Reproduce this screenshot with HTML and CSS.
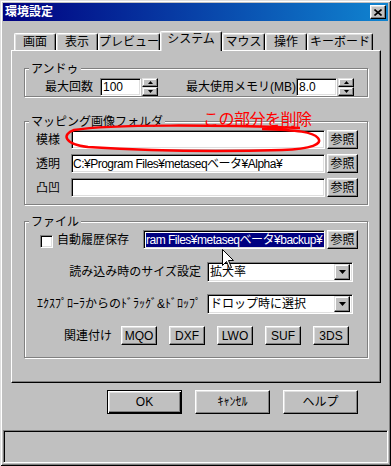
FILE: index.html
```html
<!DOCTYPE html>
<html lang="ja">
  <head>
    <meta charset="UTF-8" />
    <title>環境設定</title>
    <link rel="stylesheet" href="styles.css">
  </head>
  <body>
    <div class="window">
      <div class="titlebar">
        <span class="title">環境設定</span>
        <span class="close-btn">
          <svg width="8" height="7" viewBox="0 0 8 7"><path d="M0.5 0.5L7.5 6.5M7.5 0.5L0.5 6.5" stroke="#000" stroke-width="1.6" /></svg>
        </span>
      </div>

      <div class="tabs">
        <div class="tab tab-screen">画面</div>
        <div class="tab tab-view">表示</div>
        <div class="tab tab-preview">プレビュー</div>
        <div class="tab tab-system active">システム</div>
        <div class="tab tab-mouse">マウス</div>
        <div class="tab tab-op">操作</div>
        <div class="tab tab-key">キーボード</div>
      </div>

      <div class="panel">
        <!-- アンドゥ -->
        <div class="group group-undo">
          <div class="group-title">アンドゥ</div>
          <div class="row undo-row">
            <span class="lbl-count">最大回数</span>
            <div class="field num">100</div>
            <div class="spin">
              <span class="spin-btn"><svg width="5" height="3"><path d="M2.5 0L5 3H0z" /></svg></span>
              <span class="spin-btn"><svg width="5" height="3"><path d="M0 0H5L2.5 3z" /></svg></span>
            </div>
            <span class="lbl-mem">最大使用メモリ(MB)</span>
            <div class="field num">8.0</div>
            <div class="spin">
              <span class="spin-btn"><svg width="5" height="3"><path d="M2.5 0L5 3H0z" /></svg></span>
              <span class="spin-btn"><svg width="5" height="3"><path d="M0 0H5L2.5 3z" /></svg></span>
            </div>
          </div>
        </div>

        <!-- マッピング画像フォルダ -->
        <div class="group group-map">
          <div class="group-title">マッピング画像フォルダ</div>
          <div class="row path-row first">
            <span class="lbl-path">模様</span>
            <div class="field path"></div>
            <div class="btn btn-ref">参照</div>
          </div>
          <div class="row path-row">
            <span class="lbl-path">透明</span>
            <div class="field path">C:¥Program Files¥metaseqベータ¥Alpha¥</div>
            <div class="btn btn-ref">参照</div>
          </div>
          <div class="row path-row">
            <span class="lbl-path">凸凹</span>
            <div class="field path"></div>
            <div class="btn btn-ref">参照</div>
          </div>
        </div>

        <!-- ファイル -->
        <div class="group group-file">
          <div class="group-title">ファイル</div>
          <div class="row backup-row">
            <span class="checkbox"></span>
            <span class="lbl-backup">自動履歴保存</span>
            <div class="field backup"><span class="selected">ram Files¥metaseqベータ¥backup¥</span></div>
            <div class="btn btn-ref">参照</div>
          </div>
          <div class="row combo-row">
            <span class="lbl-combo">読み込み時のサイズ設定</span>
            <div class="field combo">
              <span class="combo-text">拡大率</span>
              <span class="combo-btn"><svg width="7" height="4"><path d="M0 0H7L3.5 4z" /></svg></span>
            </div>
          </div>
          <div class="row combo-row">
            <span class="lbl-combo">ｴｸｽﾌﾟﾛｰﾗからのﾄﾞﾗｯｸﾞ&amp;ﾄﾞﾛｯﾌﾟ</span>
            <div class="field combo">
              <span class="combo-text">ドロップ時に選択</span>
              <span class="combo-btn"><svg width="7" height="4"><path d="M0 0H7L3.5 4z" /></svg></span>
            </div>
          </div>
          <div class="row assoc-row">
            <span class="lbl-assoc">関連付け</span>
            <div class="btn btn-ext">MQO</div>
            <div class="btn btn-ext">DXF</div>
            <div class="btn btn-ext">LWO</div>
            <div class="btn btn-ext">SUF</div>
            <div class="btn btn-ext">3DS</div>
          </div>
        </div>
      </div>

      <div class="actions">
        <div class="btn btn-action default">OK</div>
        <div class="btn btn-action">ｷｬﾝｾﾙ</div>
        <div class="btn btn-action">ヘルプ</div>
      </div>

      <div class="statusbar"></div>

      <!-- 注釈 -->
      <div class="note">この部分を削除</div>
      <svg class="note-circle" width="391" height="466" viewBox="0 0 391 466">
        <path d="M300 128 C220 125 110 124 74 130 C62 134 63 144 88 147 C150 151 220 152 282 150 C312 149 323 144 318 138 C313 132 298 130 262 129" fill="none" stroke="#ff0000" stroke-width="2.5" />
      </svg>
      <svg class="cursor" width="13" height="21" viewBox="0 0 13 21">
        <path d="M0.5 0.5V16.5L4.5 12.5L7.5 19.5L9.5 18.5L6.5 11.5H11.5Z" fill="#fff" stroke="#000" stroke-width="1" />
      </svg>
    </div>
  </body>
</html>
```

FILE: styles.css
```css
* {
  margin: 0;
  padding: 0;
  box-sizing: border-box;
}

body {
  width: 391px;
  height: 466px;
  overflow: hidden;
  background-color: #c0c0c0;
  font-family: "Liberation Sans", "Noto Sans CJK JP", sans-serif;
  font-size: 12px;
  line-height: 14px;
  color: #000;
}

.window {
  position: relative;
  width: 391px;
  height: 466px;
  padding: 3px;
  background-color: #c0c0c0;
  box-shadow: inset 1px 1px 0 #dfdfdf, inset -1px -1px 0 #000,
    inset 2px 2px 0 #fff, inset -2px -2px 0 #808080;
}

/* タイトルバー */
.titlebar {
  height: 18px;
  display: flex;
  align-items: center;
  justify-content: space-between;
  padding: 0 2px;
  background: linear-gradient(to right, #000080, #1084d0);
  color: #fff;
  font-weight: bold;
}

.close-btn {
  width: 16px;
  height: 14px;
  display: flex;
  align-items: center;
  justify-content: center;
  background-color: #c0c0c0;
  border: 1px solid;
  border-color: #fff #000 #000 #fff;
  box-shadow: inset -1px -1px 0 #808080, inset 1px 1px 0 #dfdfdf;
}

/* タブ */
.tabs {
  display: flex;
  align-items: flex-end;
  height: 19px;
  margin: 10px 0 0 11px;
}

.tab {
  height: 17px;
  padding-top: 1px;
  text-align: center;
  border-top: 1px solid #fff;
  border-left: 1px solid #fff;
  border-right: 1px solid #000;
  border-radius: 2px 2px 0 0;
  box-shadow: inset -1px 0 0 #808080, inset 1px 1px 0 #dfdfdf;
}

.tab.active {
  position: relative;
  z-index: 1;
  height: 20px;
  margin-bottom: -1px;
  padding-top: 0;
  background-color: #c0c0c0;
}

.tab-screen { width: 42px; }
.tab-view { width: 42px; }
.tab-preview { width: 62px; }
.tab-system { width: 62px; }
.tab-mouse { width: 43px; }
.tab-op { width: 42px; }
.tab-key { width: 66px; }

.panel {
  width: 370px;
  height: 333px;
  margin-left: 8px;
  padding: 17px 0 0 12px;
  border: 1px solid;
  border-color: #fff #000 #000 #fff;
  box-shadow: inset -1px -1px 0 #808080;
}

/* グループ */
.group {
  width: 344px;
  border: 1px solid #808080;
  box-shadow: 1px 1px 0 #fff, inset 1px 1px 0 #fff;
}

.group-title {
  width: fit-content;
  height: 14px;
  margin: -7px 0 0 4px;
  padding: 0 2px;
  background-color: #c0c0c0;
}

.group-undo { height: 29px; }
.group-map { height: 84px; margin-top: 24px; }
.group-file { height: 137px; margin-top: 16px; }

.row {
  display: flex;
  align-items: center;
}

.row > span {
  flex-shrink: 0;
  white-space: nowrap;
}

/* 共通部品 */
.field {
  background-color: #fff;
  border: 1px solid;
  border-color: #808080 #fff #fff #808080;
  box-shadow: inset 1px 1px 0 #000, inset -1px -1px 0 #dfdfdf;
  display: flex;
  align-items: center;
  padding-left: 2px;
  white-space: nowrap;
  overflow: hidden;
}

.btn {
  display: flex;
  align-items: center;
  justify-content: center;
  background-color: #c0c0c0;
  border: 1px solid;
  border-color: #fff #000 #000 #fff;
  box-shadow: inset -1px -1px 0 #808080, inset 1px 1px 0 #dfdfdf;
}

/* アンドゥ行 */
.undo-row {
  height: 18px;
  margin-top: 2px;
  padding-left: 20px;
}

.lbl-count { width: 55px; }
.lbl-mem { width: 110px; margin-left: 28px; }

.num {
  width: 41px;
  height: 18px;
}

.spin {
  width: 16px;
  height: 18px;
  margin-left: 1px;
  display: flex;
  flex-direction: column;
}

.spin-btn {
  height: 9px;
  display: flex;
  align-items: center;
  justify-content: center;
  border: 1px solid;
  border-color: #dfdfdf #000 #000 #dfdfdf;
  box-shadow: inset -1px -1px 0 #808080, inset 1px 1px 0 #fff;
}

/* マッピング */
.path-row {
  height: 19px;
  margin-top: 5px;
  padding-left: 11px;
}

.path-row.first { margin-top: 1px; }

.lbl-path { width: 35px; }

.path {
  width: 254px;
  height: 19px;
  padding-left: 1px;
  letter-spacing: -0.5px;
}

.btn-ref {
  width: 31px;
  height: 19px;
  margin-left: 2px;
}

/* ファイル */
.backup-row {
  height: 19px;
  margin-top: 1px;
  padding-left: 15px;
}

.row > .checkbox {
  width: 13px;
  height: 13px;
  margin-top: 3px;
  background-color: #fff;
  border: 1px solid;
  border-color: #808080 #fff #fff #808080;
  box-shadow: inset 1px 1px 0 #000, inset -1px -1px 0 #dfdfdf;
}

.lbl-backup {
  width: 86px;
  margin-left: 4px;
}

.backup {
  width: 182px;
  height: 19px;
}

.selected {
  display: block;
  width: 100%;
  height: 14px;
  background-color: #000080;
  color: #fff;
  letter-spacing: -0.5px;
  overflow: hidden;
}

.combo-row {
  height: 20px;
  margin-top: 12px;
}

.backup-row + .combo-row { margin-top: 13px; }

.lbl-combo {
  width: 176px;
  text-align: right;
}

.combo {
  width: 146px;
  height: 20px;
  margin-left: 6px;
  padding: 0 2px 0 2px;
  justify-content: space-between;
}

.combo-btn {
  width: 16px;
  height: 16px;
  display: flex;
  align-items: center;
  justify-content: center;
  background-color: #c0c0c0;
  border: 1px solid;
  border-color: #dfdfdf #000 #000 #dfdfdf;
  box-shadow: inset -1px -1px 0 #808080, inset 1px 1px 0 #fff;
}

.assoc-row {
  height: 19px;
  margin-top: 12px;
  padding-left: 39px;
  gap: 12px;
}

.row > .lbl-assoc { width: 45px; }

.btn-ext {
  width: 36px;
  height: 19px;
}

/* 下部ボタン */
.actions {
  display: flex;
  gap: 13px;
  margin: 7px 0 0 104px;
}

.btn-action {
  width: 75px;
  height: 24px;
}

.btn-action.default {
  border-color: #000;
  box-shadow: inset 1px 1px 0 #fff, inset -1px -1px 0 #000,
    inset -2px -2px 0 #808080, inset 2px 2px 0 #dfdfdf;
}

.statusbar {
  height: 33px;
  margin-top: 16px;
  border: 1px solid;
  border-color: #808080 #fff #fff #808080;
  box-shadow: inset 1px 1px 0 #000;
}

/* 注釈 */
.note {
  position: absolute;
  left: 203px;
  top: 109px;
  font-family: "Noto Sans CJK JP", sans-serif;
  font-size: 16px;
  line-height: 18px;
  letter-spacing: -0.5px;
  color: #ff0000;
}

.note-circle {
  position: absolute;
  left: 0;
  top: 0;
  pointer-events: none;
}

.cursor {
  position: absolute;
  left: 222px;
  top: 249px;
}
```
